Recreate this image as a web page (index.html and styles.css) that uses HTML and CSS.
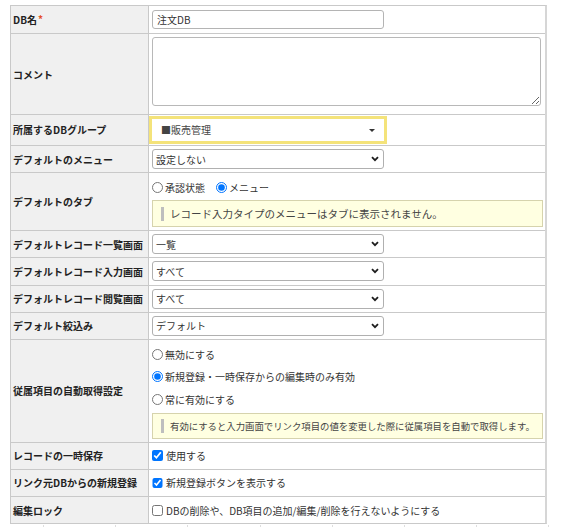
FILE: index.html
```html
<!DOCTYPE html>
<html lang="ja">
<head>
<meta charset="utf-8">
<title>DB設定</title>
<link rel="stylesheet" href="styles.css">
</head>
<body>
<div class="page">
  <div class="form-grid">
    <div class="lbl">DB名<span class="req">*</span></div>
    <div class="val r-input"><input class="text" type="text" value="注文DB"></div>

    <div class="lbl">コメント</div>
    <div class="val r-area"><textarea class="area"></textarea></div>

    <div class="lbl">所属するDBグループ</div>
    <div class="val r-group"><div class="s2"><span class="s2-text">■販売管理</span><span class="tri"></span></div></div>

    <div class="lbl">デフォルトのメニュー</div>
    <div class="val"><div class="sel"><span>設定しない</span><svg class="chev" width="8" height="6" viewBox="0 0 8 6"><path d="M1 1.2 L4 4.2 L7 1.2" fill="none" stroke="#1e1e1e" stroke-width="1.8"/></svg></div></div>

    <div class="lbl">デフォルトのタブ</div>
    <div class="val r-tab">
      <div class="opts">
        <label class="opt"><input type="radio" name="tab">承認状態</label>
        <label class="opt"><input type="radio" name="tab" checked>メニュー</label>
      </div>
      <div class="note note-wide">レコード入力タイプのメニューはタブに表示されません。</div>
    </div>

    <div class="lbl">デフォルトレコード一覧画面</div>
    <div class="val"><div class="sel"><span>一覧</span><svg class="chev" width="8" height="6" viewBox="0 0 8 6"><path d="M1 1.2 L4 4.2 L7 1.2" fill="none" stroke="#1e1e1e" stroke-width="1.8"/></svg></div></div>

    <div class="lbl">デフォルトレコード入力画面</div>
    <div class="val"><div class="sel"><span>すべて</span><svg class="chev" width="8" height="6" viewBox="0 0 8 6"><path d="M1 1.2 L4 4.2 L7 1.2" fill="none" stroke="#1e1e1e" stroke-width="1.8"/></svg></div></div>

    <div class="lbl">デフォルトレコード閲覧画面</div>
    <div class="val"><div class="sel"><span>すべて</span><svg class="chev" width="8" height="6" viewBox="0 0 8 6"><path d="M1 1.2 L4 4.2 L7 1.2" fill="none" stroke="#1e1e1e" stroke-width="1.8"/></svg></div></div>

    <div class="lbl">デフォルト絞込み</div>
    <div class="val"><div class="sel"><span>デフォルト</span><svg class="chev" width="8" height="6" viewBox="0 0 8 6"><path d="M1 1.2 L4 4.2 L7 1.2" fill="none" stroke="#1e1e1e" stroke-width="1.8"/></svg></div></div>

    <div class="lbl">従属項目の自動取得設定</div>
    <div class="val r-auto">
      <label class="opt line"><input type="radio" name="auto">無効にする</label>
      <label class="opt line"><input type="radio" name="auto" checked>新規登録・一時保存からの編集時のみ有効</label>
      <label class="opt line"><input type="radio" name="auto">常に有効にする</label>
      <div class="note note-narrow">有効にすると入力画面でリンク項目の値を変更した際に従属項目を自動で取得します。</div>
    </div>

    <div class="lbl">レコードの一時保存</div>
    <div class="val"><label class="chk"><input type="checkbox" checked>使用する</label></div>

    <div class="lbl">リンク元DBからの新規登録</div>
    <div class="val"><label class="chk"><input type="checkbox" checked>新規登録ボタンを表示する</label></div>

    <div class="lbl">編集ロック</div>
    <div class="val"><label class="chk"><input type="checkbox">DBの削除や、DB項目の追加/編集/削除を行えないようにする</label></div>
  </div>
  <div class="ticks"><span></span><span></span><span></span><span></span><span></span><span></span><span></span><span></span></div>
</div>
</body>
</html>
```

FILE: styles.css
```css
* { box-sizing: border-box; }

body {
  margin: 0;
  background: #fff;
  font-family: "Noto Sans CJK JP", "Noto Sans", sans-serif;
  font-size: 10px;
  color: #333;
  overflow: hidden;
}

.page {
  padding: 5px 0 0 10px;
}

.form-grid {
  display: grid;
  grid-template-columns: 137px 396px;
  gap: 1px;
  width: 537px;
  background: #c9c9c9;
  border: 1px solid #c9c9c9;
  border-right: 2px solid #d6d6d6;
}

.lbl {
  background: #f0f0f0;
  color: #222;
  font-weight: 700;
  display: flex;
  align-items: center;
  padding-left: 2px;
  white-space: nowrap;
}

.req {
  color: #e5502a;
  font-size: 10px;
  align-self: flex-start;
  margin-top: 5px;
  margin-left: 1px;
}

.val {
  background: #fff;
  padding: 3.15px 2px 3.15px 3px;
}

.r-input { padding-top: 4.15px; padding-bottom: 4.15px; }
.r-area { padding-top: 3px; padding-bottom: 7.7px; }
.r-group { padding-top: 4px; padding-bottom: 4px; }
.r-tab { padding-top: 3px; padding-bottom: 2.7px; }
.r-auto { padding-top: 3px; padding-bottom: 3px; }

.text {
  display: block;
  width: 232px;
  height: 19px;
  margin: 0;
  border: 1px solid #b4b4b4;
  border-radius: 3px;
  padding: 0 4px;
  font: inherit;
  color: #333;
  background: #fff;
}

.area {
  display: block;
  width: 389px;
  height: 69px;
  margin: 0;
  border: 1px solid #b8b8b8;
  border-radius: 3px;
  font: inherit;
  background: #fff;
}

.s2 {
  width: 232px;
  height: 22px;
  background: #fff;
  outline: 3px solid #f4e37a;
  display: flex;
  align-items: center;
  justify-content: space-between;
  padding: 0 9px 0 9px;
  color: #444;
}

.tri {
  width: 0;
  height: 0;
  border-left: 3px solid transparent;
  border-right: 3px solid transparent;
  border-top: 3px solid #333;
  margin-top: 1px;
}

.sel {
  width: 232px;
  height: 20px;
  border: 1px solid #b0b0b0;
  border-radius: 3px;
  display: flex;
  align-items: center;
  justify-content: space-between;
  padding: 0 4px 0 3px;
  color: #333;
  background: #fff;
}

.chev { display: block; }

.opts {
  display: flex;
  align-items: center;
  height: 22px;
  gap: 11px;
}

.opt, .chk {
  display: flex;
  align-items: center;
  gap: 2px;
  color: #333;
}

.line { height: 22.5px; }
.chk { height: 20px; gap: 3.5px; }

input[type="radio"],
input[type="checkbox"] {
  margin: 0;
  width: 11px;
  height: 11px;
}

.chk input[type="checkbox"] {
  width: 10.5px;
  height: 10.5px;
}

.note {
  margin-top: 2px;
  height: 27px;
  background: #ffffe1;
  border: 1px solid #d6d3ad;
  display: flex;
  align-items: center;
  padding-left: 8px;
  color: #444;
  white-space: nowrap;
}

.note-wide { font-size: 10.5px; }
.note-narrow { height: 26px; font-size: 9.4px; }

.note::before {
  content: "";
  flex: 0 0 3px;
  height: 14px;
  background: #bebebe;
  margin-right: 6px;
}

.ticks {
  display: flex;
  padding-left: 33px;
  height: 3px;
  margin-top: 0.5px;
}

.ticks span {
  flex: 0 0 72.2px;
  border-left: 1px solid #dedede;
}

.ticks span:last-child {
  flex-basis: 1px;
}
```
